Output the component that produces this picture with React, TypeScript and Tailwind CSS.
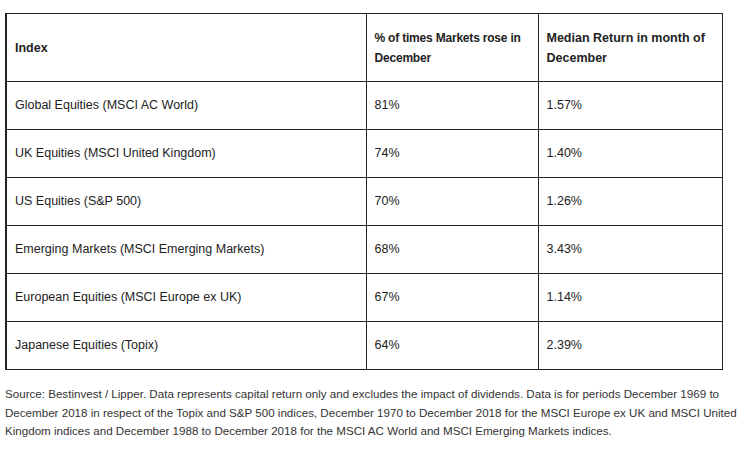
const rows = [
  ["Global Equities (MSCI AC World)", "81%", "1.57%"],
  ["UK Equities (MSCI United Kingdom)", "74%", "1.40%"],
  ["US Equities (S&P 500)", "70%", "1.26%"],
  ["Emerging Markets (MSCI Emerging Markets)", "68%", "3.43%"],
  ["European Equities (MSCI Europe ex UK)", "67%", "1.14%"],
  ["Japanese Equities (Topix)", "64%", "2.39%"],
];

export default function App() {
  return (
    <div className="h-[450px] w-[740px] bg-white pl-[5px] pt-[13px] font-['Liberation_Sans',Arial,sans-serif] text-[#222]">
      <table className="w-[718px] table-fixed border-collapse border-l-2 border-[#222] text-[12.5px]">
        <colgroup>
          <col className="w-[360px]" />
          <col className="w-[172px]" />
          <col />
        </colgroup>
        <thead>
          <tr className="h-[68px] border border-[#222]">
            <th className="border-r border-[#222] px-2 text-left text-[12.5px] font-bold leading-5">Index</th>
            <th className="border-r border-[#222] pl-2 pr-0 text-left text-[12px] font-bold leading-5 tracking-[-0.2px]">% of times Markets rose in December</th>
            <th className="border-r border-[#222] px-2 text-left text-[12.5px] font-bold leading-5">Median Return in month of December</th>
          </tr>
        </thead>
        <tbody>
          {rows.map(r => (
            <tr key={r[0]} className="h-[48px] border-b border-[#222]">
              <td className="border-r border-[#222] px-2">{r[0]}</td>
              <td className="border-r border-[#222] px-2">{r[1]}</td>
              <td className="border-r border-[#222] px-2">{r[2]}</td>
            </tr>
          ))}
        </tbody>
      </table>
      <p className="mt-[15px] w-[732px] text-[11.6px] leading-[18.5px] text-[#333]">
        Source: Bestinvest / Lipper. Data represents capital return only and excludes the impact of dividends. Data is for periods December 1969 to December 2018 in respect of the Topix and S&amp;P 500 indices, December 1970 to December 2018 for the MSCI Europe ex UK and MSCI United Kingdom indices and December 1988 to December 2018 for the MSCI AC World and MSCI Emerging Markets indices.
      </p>
    </div>
  );
}
